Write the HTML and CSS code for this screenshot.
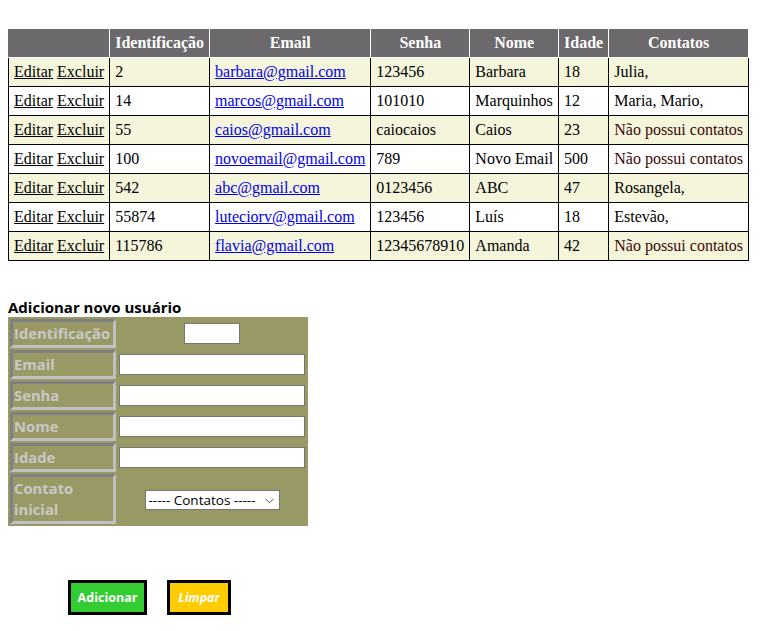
FILE: index.html
```html
<!DOCTYPE html>
<html lang="pt-BR">
<head>
<meta charset="utf-8">
<title>Usuários</title>
<link rel="stylesheet" href="styles.css">
</head>
<body>
<table class="users">
  <thead>
    <tr><th></th><th>Identificação</th><th>Email</th><th>Senha</th><th>Nome</th><th>Idade</th><th>Contatos</th></tr>
  </thead>
  <tbody>
    <tr><td><a class="act" href="#">Editar</a> <a class="act" href="#">Excluir</a></td><td>2</td><td><a class="mail" href="#">barbara@gmail.com</a></td><td>123456</td><td>Barbara</td><td>18</td><td>Julia,</td></tr>
    <tr><td><a class="act" href="#">Editar</a> <a class="act" href="#">Excluir</a></td><td>14</td><td><a class="mail" href="#">marcos@gmail.com</a></td><td>101010</td><td>Marquinhos</td><td>12</td><td>Maria, Mario,</td></tr>
    <tr><td><a class="act" href="#">Editar</a> <a class="act" href="#">Excluir</a></td><td>55</td><td><a class="mail" href="#">caios@gmail.com</a></td><td>caiocaios</td><td>Caios</td><td>23</td><td class="none">Não possui contatos</td></tr>
    <tr><td><a class="act" href="#">Editar</a> <a class="act" href="#">Excluir</a></td><td>100</td><td><a class="mail" href="#">novoemail@gmail.com</a></td><td>789</td><td>Novo Email</td><td>500</td><td class="none">Não possui contatos</td></tr>
    <tr><td><a class="act" href="#">Editar</a> <a class="act" href="#">Excluir</a></td><td>542</td><td><a class="mail" href="#">abc@gmail.com</a></td><td>0123456</td><td>ABC</td><td>47</td><td>Rosangela,</td></tr>
    <tr><td><a class="act" href="#">Editar</a> <a class="act" href="#">Excluir</a></td><td>55874</td><td><a class="mail" href="#">luteciorv@gmail.com</a></td><td>123456</td><td>Luís</td><td>18</td><td>Estevão,</td></tr>
    <tr><td><a class="act" href="#">Editar</a> <a class="act" href="#">Excluir</a></td><td>115786</td><td><a class="mail" href="#">flavia@gmail.com</a></td><td>12345678910</td><td>Amanda</td><td>42</td><td class="none">Não possui contatos</td></tr>
  </tbody>
</table>

<h3 class="form-title">Adicionar novo usuário</h3>
<form class="new-user">
  <table class="form-table">
    <tr><th>Identificação</th><td><input class="in-id" type="text"></td></tr>
    <tr><th>Email</th><td><input class="in-wide" type="text"></td></tr>
    <tr><th>Senha</th><td><input class="in-wide" type="text"></td></tr>
    <tr><th>Nome</th><td><input class="in-wide" type="text"></td></tr>
    <tr><th>Idade</th><td><input class="in-wide" type="text"></td></tr>
    <tr><th>Contato inicial</th><td>
      <span class="select-wrap">
        <select class="contacts"><option>----- Contatos -----</option></select>
        <svg class="chev" width="9" height="6" viewBox="0 0 9 6"><path d="M0.5 0.8 L4.5 4.8 L8.5 0.8" fill="none" stroke="#555" stroke-width="1"/></svg>
      </span>
    </td></tr>
  </table>
  <div class="buttons">
    <button type="button" class="btn btn-add">Adicionar</button>
    <button type="reset" class="btn btn-clear">Limpar</button>
  </div>
</form>
</body>
</html>
```

FILE: styles.css
```css
body {
  margin: 8px;
  font-family: "Liberation Serif", "Times New Roman", serif;
  font-size: 16px;
  background: #fff;
  color: #000;
}

.users {
  border-collapse: collapse;
  margin-top: 20px;
  line-height: 18px;
}

.users th {
  background: #6b696b;
  color: #fff;
  font-weight: bold;
  padding: 5px;
  border: 1px solid #fff;
  text-align: center;
}

.users th:first-child {
  border-left-color: #6b696b;
}

.users td {
  border: 1px solid #000;
  padding: 5px;
  white-space: nowrap;
}

.users tbody tr:nth-child(odd) td {
  background: #f5f5dc;
}

.act {
  color: #000;
  text-decoration: underline;
}

.mail {
  color: #0000ee;
  text-decoration: underline;
}

.none {
  color: #3a0808;
}

.form-title {
  font-family: "Open Sans", "Noto Sans", sans-serif;
  font-size: 15px;
  font-weight: bold;
  line-height: 20px;
  margin: 36px 0 0 0;
}

.new-user {
  margin: 0;
}

.form-table {
  background: #999966;
  border-spacing: 2px;
  font-family: "Open Sans", "Noto Sans", sans-serif;
}

.form-table th {
  color: #c8c8c8;
  font-size: 14.8px;
  font-weight: bold;
  line-height: 21px;
  text-align: left;
  padding: 1px;
  border-style: solid;
  border-width: 3px;
  border-color: #808080 #c0c0c0 #c0c0c0 #808080;
  width: 98px;
}

.form-table td {
  padding: 1px;
  text-align: center;
  vertical-align: middle;
}

.form-table input {
  display: block;
  box-sizing: border-box;
  height: 21px;
  border: 1px solid #767676;
  background: #fff;
  margin: 0 auto;
  padding: 1px 2px;
}

.in-wide {
  width: 186px;
}

.in-id {
  width: 56px;
}

.select-wrap {
  position: relative;
  display: inline-block;
  vertical-align: middle;
}

.contacts {
  appearance: none;
  -webkit-appearance: none;
  box-sizing: border-box;
  width: 135px;
  height: 20px;
  border: 1px solid #767676;
  border-radius: 0;
  background: #fff;
  font-family: "Open Sans", "Noto Sans", sans-serif;
  font-size: 13.5px;
  line-height: 18px;
  color: #000;
  padding: 0 0 0 3px;
  margin: 0;
  display: block;
}

.chev {
  position: absolute;
  right: 6px;
  top: 8px;
  pointer-events: none;
}

.buttons {
  display: flex;
  gap: 20px;
  margin: 54px 0 0 60px;
}

.btn {
  box-sizing: border-box;
  height: 35px;
  border: 3px solid #000;
  color: #fff;
  font-family: "Open Sans", "Noto Sans", sans-serif;
  font-size: 12.5px;
  font-weight: bold;
  padding: 0;
  border-radius: 0;
}

.btn-add {
  background: #33cc33;
  width: 79px;
}

.btn-clear {
  background: #ffcc00;
  font-style: italic;
  width: 64px;
}
```
